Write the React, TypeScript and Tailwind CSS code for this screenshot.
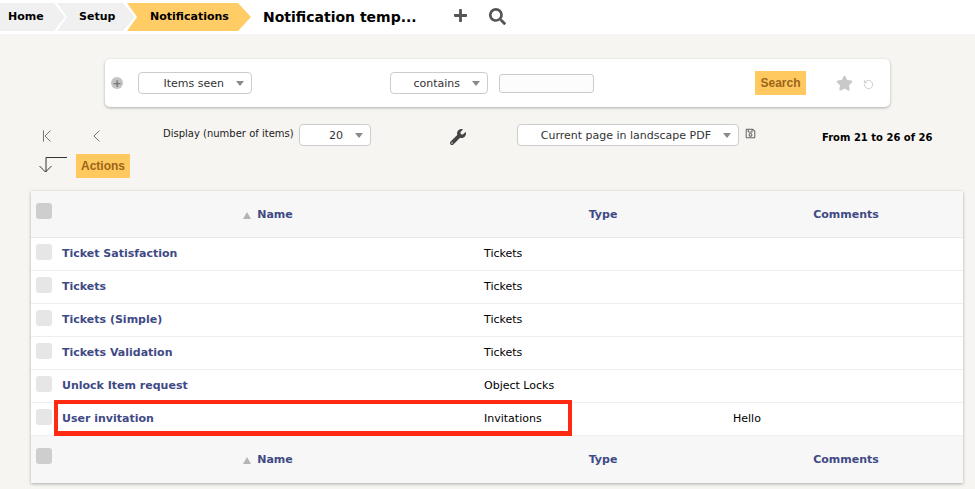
import { RotateCcw, Star } from "lucide-react";
import { FaPlus, FaRegSave, FaSearch, FaWrench } from "react-icons/fa";

const rows = [
  { name: "Ticket Satisfaction", type: "Tickets", comment: "" },
  { name: "Tickets", type: "Tickets", comment: "" },
  { name: "Tickets (Simple)", type: "Tickets", comment: "" },
  { name: "Tickets Validation", type: "Tickets", comment: "" },
  { name: "Unlock Item request", type: "Object Locks", comment: "" },
  { name: "User invitation", type: "Invitations", comment: "Hello" },
];

// Small grey triangle used by the dropdowns
function Caret() {
  return <span className="h-0 w-0 border-x-[4px] border-t-[5px] border-x-transparent border-t-[#8a8a8a]" />;
}

function Select({ label, className }: { label: string; className: string }) {
  return (
    <div className={`flex h-[22px] items-center justify-end rounded-[4px] border border-[#cccccc] bg-white pr-[7px] text-[11px] text-[#333333] ${className}`}>
      <span className="mr-[12px] pt-[3px]">{label}</span>
      <Caret />
    </div>
  );
}

function TableHead({ className }: { className: string }) {
  return (
    <div className={`flex bg-[#f7f7f7] ${className}`}>
      <div className="w-[31px] shrink-0 pl-[5px] pt-[12px]">
        <div className="h-[16px] w-[16px] rounded-[3px] bg-[#cecece]" />
      </div>
      <div className="flex w-[422px] items-center justify-center gap-[6px] pr-[10px] pt-[2px]">
        <span className="h-0 w-0 border-x-[4px] border-b-[7px] border-x-transparent border-b-[#b4b4b4]" />
        <span className="font-bold text-[#3f4a85]">Name</span>
      </div>
      <div className="flex w-[238px] items-center justify-center pt-[2px] font-bold text-[#3f4a85]">Type</div>
      <div className="flex flex-1 items-center justify-center pl-[7px] pt-[2px] font-bold text-[#3f4a85]">Comments</div>
    </div>
  );
}

export default function App() {
  return (
    <div className="h-[489px] w-[975px] overflow-hidden bg-[#f6f5f1] font-['DejaVu_Sans',sans-serif] text-[11px] text-black">
      {/* Breadcrumb */}
      <div className="flex h-[34px] items-center bg-white">
        <div className="flex h-[28px] items-center">
          <div className="flex h-full w-[65px] items-center bg-[#f0f0f0] pl-[8px] font-bold [clip-path:polygon(0_0,calc(100%-11px)_0,100%_50%,calc(100%-11px)_100%,0_100%)]">Home</div>
          <div className="-ml-[8px] flex h-full w-[78px] items-center bg-[#f0f0f0] pl-[22px] font-bold [clip-path:polygon(0_0,calc(100%-12px)_0,100%_50%,calc(100%-12px)_100%,0_100%,10px_50%)]">Setup</div>
          <div className="-ml-[8px] flex h-full w-[124px] items-center bg-[#ffcc66] pl-[23px] font-bold [clip-path:polygon(0_0,calc(100%-13px)_0,100%_50%,calc(100%-13px)_100%,0_100%,10px_50%)]">Notifications</div>
        </div>
        <div className="ml-[12px] text-[14px] font-bold">Notification temp...</div>
        <FaPlus size={15} className="-mt-[4px] ml-[36px] text-[#555555]" />
        <FaSearch size={17} className="-mt-[1px] ml-[21px] text-[#555555]" />
      </div>

      {/* Search form */}
      <div className="ml-[105px] mt-[25px] flex h-[48px] w-[785px] items-center rounded-[5px] bg-white shadow-[0_1px_3px_rgba(0,0,0,0.3)]">
        <div className="ml-[6px] flex h-[12px] w-[12px] items-center justify-center rounded-full bg-[#c4c4c4] text-[11px] font-bold leading-none text-[#777777]">+</div>
        <Select label="Items seen" className="ml-[15px] w-[114px]" />
        <Select label="contains" className="ml-[138px] w-[98px]" />
        <div className="ml-[11px] h-[19px] w-[95px] rounded-[3px] border border-[#cccccc] bg-[#fcfcfc]" />
        <div className="ml-[161px] flex h-[24px] w-[51px] items-center justify-center bg-[#ffc95f] font-['Liberation_Sans',sans-serif] text-[12px] font-bold text-[#9a6518]">Search</div>
        <Star size={17} className="ml-[30px] fill-[#c9c9c9] text-[#c9c9c9]" />
        <RotateCcw size={11} strokeWidth={2} className="ml-[10px] mt-[3px] text-[#c9c9c9]" />
      </div>

      {/* Pagination row */}
      <div className="mt-[17px] flex h-[22px] items-start">
        <svg width="10" height="12" viewBox="0 0 10 12" fill="none" stroke="#777777" strokeWidth="1" className="ml-[43px] mt-[6px]">
          <path d="M0.500 0.500V11.500M7.500 0.500L2 6L7.500 11.500" />
        </svg>
        <svg width="8" height="12" viewBox="0 0 8 12" fill="none" stroke="#777777" strokeWidth="1" className="ml-[40px] mt-[6px]">
          <path d="M6.500 0.500L1 6L6.500 11.500" />
        </svg>
        <span className="ml-[62px] mt-[2px] w-[136px] whitespace-nowrap text-[10px] text-[#222222]">Display (number of items)</span>
        <Select label="20" className="w-[72px]" />
        <FaWrench size={16} className="ml-[79px] mt-[5px] text-[#444444]" />
        <Select label="Current page in landscape PDF" className="ml-[51px] w-[222px]" />
        <FaRegSave size={11} className="ml-[6px] mt-[4px] text-[#666666]" />
        <span className="ml-[66px] mt-[6px] whitespace-nowrap text-[10px] font-bold">From 21 to 26 of 26</span>
      </div>

      {/* Actions row */}
      <div className="ml-[38px] mt-[8px] flex h-[24px] items-center gap-[8px]">
        <svg width="30" height="20" viewBox="0 0 30 20" fill="none" stroke="#333333" strokeWidth="1" className="-mt-[2px]">
          <path d="M29 2.500H8V17M1.500 11L7.500 17L13.500 11" />
        </svg>
        <div className="flex h-[24px] w-[54px] items-center justify-center bg-[#ffc95f] font-['Liberation_Sans',sans-serif] text-[12px] font-bold text-[#9a6518]">Actions</div>
      </div>

      {/* Table */}
      <div className="relative ml-[31px] mt-[13px] w-[932px] bg-white shadow-[0_1px_3px_rgba(0,0,0,0.3)]">
        <TableHead className="h-[47px] border-b border-[#e8e8e8]" />
        {rows.map((row) => (
          <div key={row.name} className="flex h-[33px] items-center border-b border-[#eeeeee]">
            <div className="w-[31px] shrink-0 pb-[4px] pl-[5px]">
              <div className="h-[16px] w-[16px] rounded-[3px] bg-[#e6e6e6]" />
            </div>
            <div className="w-[422px] font-bold text-[#3f4a85]">{row.name}</div>
            <div className="w-[249px]">{row.type}</div>
            <div>{row.comment}</div>
          </div>
        ))}
        <TableHead className="h-[47px]" />
        {/* Red highlight drawn over the last row */}
        <div className="absolute left-[23px] top-[209px] h-[36px] w-[518px] border-[4px] border-b-[5px] border-[#ff2a12]" />
      </div>
    </div>
  );
}
